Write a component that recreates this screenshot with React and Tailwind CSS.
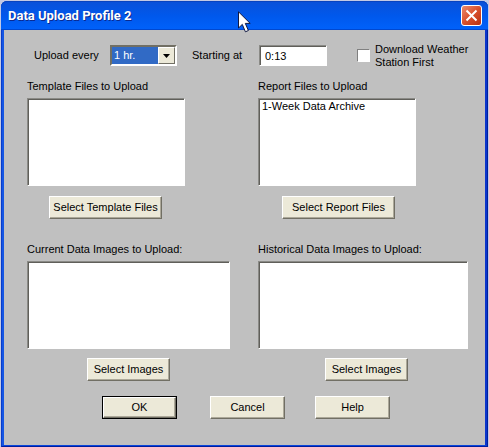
import React, { useState } from "react";

const sunken =
  "border border-t-[#8a8a86] border-l-[#8a8a86] border-r-white border-b-white bg-white shadow-[inset_1px_1px_0_#605f5a] rounded-none outline-none";

const raised =
  "h-[23px] bg-[#ece9d8] text-center border border-t-white border-l-white border-r-[#716f64] border-b-[#716f64] shadow-[inset_-1px_-1px_0_#aca899]";

function PushButton({ children, className = "" }) {
  return (
    <button type="button" className={`${raised} ${className}`}>
      {children}
    </button>
  );
}

function FileList({ id, label, items = [], listClass, button, buttonClass }) {
  return (
    <div className="flex flex-col items-start">
      <label htmlFor={id} className="whitespace-nowrap mb-[5px]">
        {label}
      </label>
      <select
        id={id}
        multiple
        className={`${sunken} block h-[88px] overflow-hidden p-px ${listClass}`}
      >
        {items.map((item) => (
          <option key={item} className="min-h-0 px-[2px] py-0 leading-[15px]">
            {item}
          </option>
        ))}
      </select>
      <PushButton className={buttonClass}>{button}</PushButton>
    </div>
  );
}

function TitleBar() {
  return (
    <header className="relative flex h-[29px] items-center justify-between rounded-t-md bg-linear-to-b from-[#0a50d8] via-[#0058ec] to-[#0062fb] pl-[7px] pr-[6px] shadow-[inset_0_1px_0_#0843c0,inset_0_-1px_0_#0048d0]">
      <h1 className="font-['Roboto',sans-serif] text-[13px] leading-[18px] font-bold text-white [text-shadow:1px_1px_0_#0a2a90]">
        Data Upload Profile 2
      </h1>
      <button
        type="button"
        aria-label="Close"
        className="flex h-[21px] w-[21px] items-center justify-center rounded-[3px] border border-white bg-linear-to-br from-[#ea8a6c] via-[#d9502c] to-[#b83010]"
      >
        <svg width="13" height="13" viewBox="0 0 13 13" fill="none" stroke="#fff" strokeWidth="2">
          <path d="M1.5 1.5 L11.5 11.5 M11.5 1.5 L1.5 11.5" />
        </svg>
      </button>
      {/* mouse pointer resting on the title bar */}
      <svg
        className="pointer-events-none absolute left-[237px] top-[10px] z-10"
        width="13"
        height="22"
        viewBox="0 0 13 22"
      >
        <path
          d="M0.5 0.8 V17 L4.3 13.4 L7.4 20.8 L10.4 19.5 L7.3 12.4 H12.2 Z"
          fill="#fff"
          stroke="#101840"
          strokeWidth="1"
        />
      </svg>
    </header>
  );
}

function App() {
  const [interval, setInterval] = useState("1 hr.");
  const [start, setStart] = useState("0:13");
  const [download, setDownload] = useState(false);

  return (
    <div className="bg-[#c3c9e4] px-px pt-px font-['Liberation_Sans',Arial,sans-serif] text-[11px] leading-[13px] text-black">
      <div className="rounded-t-md bg-[#0843c0]">
        <TitleBar />
        <form
          className="border-x border-b border-l-[#0a3cc8] border-r-[#001e9c] border-b-[#001e9c]"
          onSubmit={(e) => e.preventDefault()}
        >
          <div className="border-x-2 border-b border-l-[#1556e4] border-r-[#0a36cc] border-b-[#0a46dc] bg-[#c0c0c0] pl-[23px] pr-[17px] pt-[15px] pb-[26px]">
            <div className="flex h-[21px] items-center whitespace-nowrap pl-[7px]">
              <label htmlFor="interval" className="w-[76px] shrink-0">
                Upload every
              </label>
              <div className="relative w-[67px] shrink-0">
                <select
                  id="interval"
                  value={interval}
                  onChange={(e) => setInterval(e.target.value)}
                  className="block h-[21px] w-full appearance-none rounded-none border-2 border-t-[#716f64] border-l-[#716f64] border-r-white border-b-white bg-[#316ac5] px-[2px] py-0 text-white outline-none"
                >
                  <option>1 hr.</option>
                </select>
                <span className="pointer-events-none absolute top-[2px] right-[2px] flex h-[17px] w-[17px] items-center justify-center border border-t-white border-l-white border-r-[#716f64] border-b-[#716f64] bg-[#ece9d8]">
                  <svg width="7" height="4" viewBox="0 0 7 4">
                    <path d="M0 0 H7 L3.5 4 Z" fill="#000" />
                  </svg>
                </span>
              </div>
              <label htmlFor="start" className="ml-[15px] w-[67px] shrink-0">
                Starting at
              </label>
              <input
                id="start"
                type="text"
                value={start}
                onChange={(e) => setStart(e.target.value)}
                className={`${sunken} h-[21px] w-[68px] shrink-0 px-[5px]`}
              />
              <input
                id="download"
                type="checkbox"
                checked={download}
                onChange={(e) => setDownload(e.target.checked)}
                className="ml-[30px] h-[13px] w-[13px] shrink-0 appearance-none border border-t-[#808080] border-l-[#808080] border-r-white border-b-white bg-white checked:bg-[#316ac5]"
              />
              <label htmlFor="download" className="ml-[5px]">
                Download Weather
                <br />
                Station First
              </label>
            </div>

            <div className="mt-[14px] grid grid-cols-[203fr_210fr] gap-x-7 gap-y-6">
              <FileList
                id="templates"
                label="Template Files to Upload"
                listClass="w-[158px]"
                button="Select Template Files"
                buttonClass="mt-[10px] ml-[22px] w-[113px]"
              />
              <FileList
                id="reports"
                label="Report Files to Upload"
                items={["1-Week Data Archive"]}
                listClass="w-[158px]"
                button="Select Report Files"
                buttonClass="mt-[10px] ml-[24px] w-[113px]"
              />
              <FileList
                id="current"
                label="Current Data Images to Upload:"
                listClass="w-full"
                button="Select Images"
                buttonClass="mt-[9px] ml-[60px] w-[83px]"
              />
              <FileList
                id="historical"
                label="Historical Data Images to Upload:"
                listClass="w-full"
                button="Select Images"
                buttonClass="mt-[9px] ml-[67px] w-[83px]"
              />
            </div>

            <div className="mt-[15px] flex pl-[75px]">
              <div className="mr-[33px] border border-black">
                <button
                  type="submit"
                  className="block h-[21px] w-[73px] border border-t-white border-l-white border-r-[#716f64] border-b-[#716f64] bg-[#ece9d8] shadow-[inset_-1px_-1px_0_#aca899]"
                >
                  OK
                </button>
              </div>
              <PushButton className="mr-[30px] w-[75px]">Cancel</PushButton>
              <PushButton className="w-[75px]">Help</PushButton>
            </div>
          </div>
        </form>
      </div>
    </div>
  );
}

export default App;
